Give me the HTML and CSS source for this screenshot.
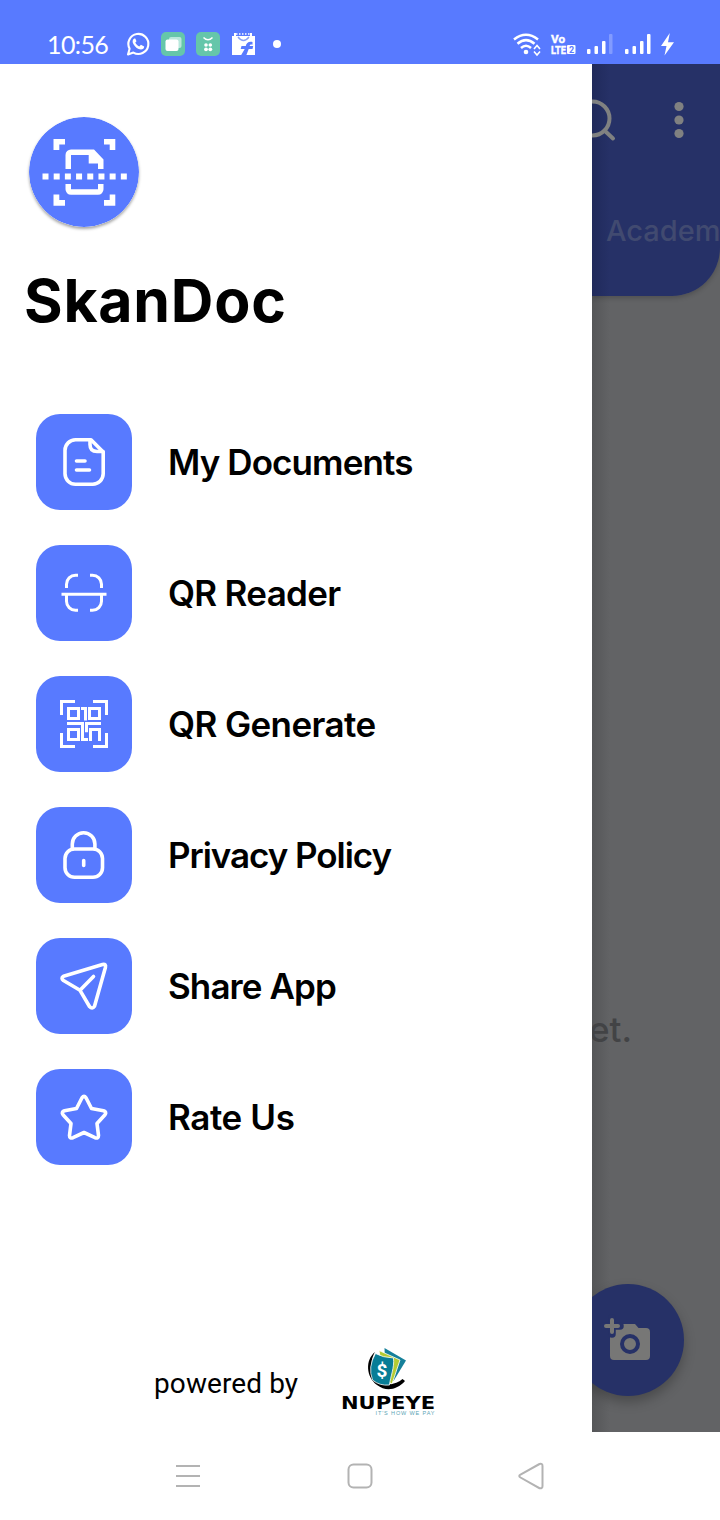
FILE: index.html
```html
<!DOCTYPE html>
<html lang="en">
<head>
	<meta charset="UTF-8">
	<title>SkanDoc</title>
	<link rel="stylesheet" href="styles.css">
</head>
<body>

<div class="status-bar">
	<span class="clock">10:56</span>
	<svg class="notifications" viewBox="120 30 165 30">
		<path d="M128 54.500l1.600-5.800a10 10 0 1 1 3.800 3.900z" fill="none" stroke="#fff" stroke-width="2.100" stroke-linejoin="round"/>
		<path d="M134.300 38.500c-2 1-2.200 3.500-.8 5.700 1.800 3 4.200 5 7.400 5.300 2 0 3.300-1.200 3.300-3l-3.300-1.800-1.600 1.700c-1.800-.6-3.300-2.200-4-3.800l1.200-1.400-1.200-2.700z" fill="#fff"/>
		<rect x="161" y="32" width="24" height="24" rx="5" fill="#65c6aa"/>
		<rect x="169" y="37" width="12.500" height="11" rx="2" fill="#b9e8dc"/>
		<rect x="165.500" y="39.500" width="13" height="11.500" rx="2" fill="#fff"/>
		<rect x="196" y="32" width="24" height="24" rx="5" fill="#65c6aa"/>
		<path d="M203.500 37.500q4.500 4.500 9 0" fill="none" stroke="#fff" stroke-width="1.500"/>
		<g fill="#fff"><circle cx="206" cy="45" r="1.800"/><circle cx="210.300" cy="45" r="1.800"/><circle cx="206" cy="49.300" r="1.900"/><circle cx="210.300" cy="49.300" r="1.900"/></g>
		<path d="M232 36h2v-3h2v3h14v-3h2v3h3v19h-23z" fill="#fff"/>
		<path d="M236 34h15" stroke="#fff" stroke-width="1.500" stroke-dasharray="1.500 1.500"/>
		<path d="M238 37q5.500 7 11 0" fill="none" stroke="#8aa0f5" stroke-width="1.300"/>
		<path d="M252.500 42c-4-.8-6.200 1-6.700 4h-4.300l-.8 3h4l-3.500 6h5.200l2.300-6h3.800l.7-3h-3.600c.4-1.400 1.300-1.600 2.900-1.300z" fill="#587aff"/>
		<circle cx="277" cy="44" r="4" fill="#fff"/>
	</svg>
	<svg class="signals" viewBox="510 30 170 30">
		<g fill="none" stroke="#fff" stroke-width="2.500">
			<path d="M514 39.500q12-9.500 24 0"/>
			<path d="M517.500 43.800q8.500-7.300 17 0"/>
			<path d="M521 48q5-4.500 10 0"/>
		</g>
		<circle cx="526" cy="52" r="2.300" fill="#fff"/>
		<path d="M534 49l3-3.500 3 3.500M534 51.500l3 3.500 3-3.500" fill="none" stroke="#fff" stroke-width="1.600"/>
		<text class="volte" x="551" y="43" textLength="14" lengthAdjust="spacingAndGlyphs">Vo</text>
		<text class="volte" x="551" y="54" textLength="15" lengthAdjust="spacingAndGlyphs">LTE</text>
		<rect x="567" y="45" width="8.500" height="9" rx="1" fill="#fff"/>
		<text class="sim" x="569" y="52.800">2</text>
		<g fill="#fff">
			<rect x="587" y="49" width="3.500" height="5" rx="1"/>
			<rect x="594.500" y="46" width="3.500" height="8" rx="1"/>
			<rect x="602" y="41" width="3.500" height="13" rx="1"/>
			<rect x="609" y="34" width="3.500" height="20" rx="1" opacity=".25"/>
			<rect x="625" y="49" width="3.500" height="5" rx="1"/>
			<rect x="632.500" y="46" width="3.500" height="8" rx="1"/>
			<rect x="640" y="41" width="3.500" height="13" rx="1"/>
			<rect x="647" y="34" width="3.500" height="20" rx="1"/>
			<path d="M669.800 33l-8.800 13h5.500l-2 9.500 9.500-13.300h-6z"/>
		</g>
	</svg>
</div>

<div class="screen">
	<div class="drawer">
		<svg class="logo" viewBox="29 117 110 110">
			<circle cx="84" cy="172" r="55" fill="#587aff"/>
			<g fill="#fff">
				<path d="M53.500 139H65v5.500h-5.700V150h-5.800zM104 139h11.300v11h-5.600v-5.500H104zM53.500 194.500h5.800v5.600H65v5.700H53.500zM109.700 194.500h5.600v11.300H104v-5.700h5.700z"/>
				<path d="M65.500 169v-14a5.500 5.500 0 0 1 5.500-5.500h23l9.500 10V169H98v-5.500h-9.300V155H71v14zM65.500 184H71v5.300h27V184h5.500v5.300a5.500 5.500 0 0 1-5.500 5.500H71a5.500 5.500 0 0 1-5.500-5.500z"/>
			</g>
			<path d="M42.500 176.500h84.500" stroke="#fff" stroke-width="6" stroke-dasharray="6 5.190"/>
		</svg>
		<h1>SkanDoc</h1>

		<ul class="menu">
			<li>
				<svg class="tile" viewBox="0 0 96 96">
					<path d="M55 25.800H39.500A10.500 10.500 0 0 0 29 36.300v23.500a10.500 10.500 0 0 0 10.500 10.400h17a10.500 10.500 0 0 0 10.700-10.400V38z"/>
					<path d="M54 26v4.500q0 7 7 7h6M40.500 47H49M40.500 56h13"/>
				</svg>
				<span class="documents">My Documents</span>
			</li>
			<li>
				<svg class="tile thin" viewBox="0 0 96 96">
					<path d="M42 30.200h-2.500a9 9 0 0 0-9 9V43M54 30.200h2.500a9 9 0 0 1 9 9V43M30.500 49.300v7a9 9 0 0 0 9 9H42M65.500 49.300v7a9 9 0 0 1-9 9H54M25.500 49.300h45"/>
				</svg>
				<span class="reader">QR Reader</span>
			</li>
			<li>
				<svg class="tile thin square" viewBox="0 0 96 96">
					<path d="M25.500 39V25.500H39M57 25.500h13.500V39M25.500 57v13.500H39M57 70.500h13.500V57"/>
					<path d="M32.500 32.500h10v10h-10zM53.500 32.500h10v10h-10zM32.500 53.500h10v10h-10zM45 32.500h4.500v12"/>
					<path d="M31 47.500h15.500v16H52M65 47.500H50.500v8.800M54.500 65V53.500h9V65"/>
				</svg>
				<span class="generate">QR Generate</span>
			</li>
			<li>
				<svg class="tile" viewBox="0 0 96 96">
					<rect x="29" y="42" width="37.500" height="28.300" rx="9.500"/>
					<path d="M36.300 42v-5a11.300 11.300 0 0 1 22.600 0v5M47.700 53.500v5"/>
				</svg>
				<span class="privacy">Privacy Policy</span>
			</li>
			<li>
				<svg class="tile" viewBox="0 0 96 96">
					<path d="M27.500 38.200L66.500 26.500Q70.300 25.700 69.400 29.500L58.500 68.300Q56.300 71.500 53.500 68.500L44 52.300 27.500 42.500Q24.500 40 27.500 38.200zM44 52.300L57.500 38.500"/>
				</svg>
				<span class="share">Share App</span>
			</li>
			<li>
				<svg class="tile" viewBox="0 0 96 96">
					<path d="M46 28.800Q48 26 50 28.800L55.500 39.500 67.500 41.800Q71 43 69 45.700L61 54.500 62.500 66.500Q62.500 69.700 59 68.700L48 63.500 37 68.700Q33.500 69.700 33.500 66.500L35 54.500 27 45.700Q25 43 28.500 41.800L40.500 39.500z"/>
				</svg>
				<span class="rate">Rate Us</span>
			</li>
		</ul>

		<div class="powered">
			<span>powered by</span>
			<svg class="nupeye" viewBox="340 1345 98 72">
				<path d="M375 1352c-10 8-9 25 2 33 9 7 20 5 28-4l-2.500-2c-6 5-14 7-21 3-10-6-13-19-6.500-30z" fill="#000"/>
				<path d="M384.500 1348l21.500 12.500-12.500 20.500-8-4z" fill="#16809a"/>
				<path d="M379 1350.500l21 9.500-8 24-8-5z" fill="#b4cb32" stroke="#fff" stroke-width=".8"/>
				<path d="M375.500 1353.500q7 4 18 4.500c1 10-3 18-4 27q-10 1-17-5-5-13 3-26.500z" fill="#087d96" stroke="#fff" stroke-width=".8"/>
				<text class="dollar" x="376.500" y="1377">$</text>
				<text class="brand" x="341" y="1408.500" textLength="94" lengthAdjust="spacingAndGlyphs">NUPEYE</text>
				<text class="slogan" x="375.500" y="1415" textLength="59">IT'S HOW WE PAY</text>
			</svg>
		</div>
	</div>

	<div class="page">
		<div class="header">
			<div class="actions">
				<svg class="search" viewBox="575 98 42 44"><circle cx="592.500" cy="118.500" r="17"/><path d="M604.500 130.500l8.500 8"/></svg>
				<svg class="more" viewBox="674 100 10 40"><circle cx="679" cy="106.500" r="4.600"/><circle cx="679" cy="120" r="4.600"/><circle cx="679" cy="133.500" r="4.600"/></svg>
			</div>
			<span class="tab">Academ</span>
		</div>
		<p class="empty">et.</p>
		<div class="fab">
			<svg viewBox="600 1314 54 50">
				<path d="M610 1324h25l3.500 4H646q4 0 4 4v24q0 4-4 4h-32q-4 0-4-4z" fill="#777776"/>
				<path d="M612 1318v16M604 1326h16" stroke="#263167" stroke-width="7.500" stroke-linecap="round"/>
				<path d="M612 1320v12M606 1326h12" stroke="#777776" stroke-width="4" stroke-linecap="round"/>
				<circle cx="630" cy="1344" r="8" fill="#777776" stroke="#263167" stroke-width="4"/>
			</svg>
		</div>
	</div>
</div>

<div class="nav-bar">
	<svg viewBox="0 0 28 28"><path d="M2 4h24M2 14h24M2 24h24"/></svg>
	<svg viewBox="0 0 28 28"><rect x="2.500" y="2.500" width="23" height="23" rx="5"/></svg>
	<svg viewBox="0 0 28 28"><path d="M21.500 2L2.500 12.500Q0 14 2.500 15.500L21.500 26.200Q24.500 27 24.500 24V4Q24.500 1 21.500 2z"/></svg>
</div>

</body>
</html>
```
FILE: styles.css
```css
* {
	box-sizing: border-box;
}

body {
	margin: 0;
	height: 1520px;
	overflow: hidden;
	background: #fff;
	color: #000;
	font-family: Inter, "Liberation Sans", sans-serif;
}

svg {
	display: block;
	flex: none;
}

/* status bar */

.status-bar {
	display: flex;
	height: 64px;
	padding: 30px 40px 4px 47px;
	background: #587aff;
	color: #fff;
}

.clock {
	width: 73px;
	font: 25px/28px Lato, sans-serif;
	letter-spacing: -0.6px;
	white-space: nowrap;
}

.notifications {
	width: 165px;
	height: 30px;
}

.signals {
	width: 170px;
	height: 30px;
	margin-left: auto;
}

.volte {
	font: bold 11.5px/1 Roboto, sans-serif;
	fill: #fff;
	stroke: #fff;
	stroke-width: 0.4px;
}

.sim {
	font: bold 9px Roboto, sans-serif;
	fill: #587aff;
}

/* drawer */

.screen {
	display: flex;
	height: 1368px;
}

.drawer {
	display: flex;
	flex-direction: column;
	flex: none;
	width: 592px;
	padding: 53px 0 15px;
	background: #fff;
}

.logo {
	width: 110px;
	height: 110px;
	margin-left: 29px;
	border-radius: 50%;
	box-shadow: 0 2px 3px rgba(0,0,0,0.35);
}

h1 {
	margin: 38px 0 0 24px;
	font-size: 59px;
	line-height: 72px;
	font-weight: 700;
	letter-spacing: 0.75px;
}

.menu {
	display: flex;
	flex-direction: column;
	gap: 35px;
	list-style: none;
	margin: 77px 0 0;
	padding: 0 36px;
}

.menu li {
	display: flex;
	align-items: center;
	gap: 36px;
	font-size: 35px;
	font-weight: 600;
	letter-spacing: -0.7px;
	white-space: nowrap;
}

.menu .documents {
	letter-spacing: -0.9px;
}

.menu .generate {
	letter-spacing: -0.6px;
}

.menu .privacy {
	letter-spacing: -1.05px;
}

.menu .share {
	letter-spacing: -0.9px;
}

.menu .rate {
	letter-spacing: -0.4px;
}

.tile {
	width: 96px;
	height: 96px;
	border-radius: 24px;
	background: #587aff;
	fill: none;
	stroke: #fff;
	stroke-width: 3.6px;
	stroke-linecap: round;
	stroke-linejoin: round;
}

.tile.thin {
	stroke-width: 3px;
	stroke-linecap: butt;
}

.tile.square {
	stroke-linejoin: miter;
}

.powered {
	display: flex;
	align-items: center;
	gap: 42px;
	margin-top: auto;
	padding-left: 154px;
	font: 28px/34px Roboto, sans-serif;
}

.powered span {
	padding-top: 6px;
	letter-spacing: 0.1px;
}

.nupeye {
	width: 98px;
	height: 72px;
}

.dollar {
	font: bold 19px Roboto, sans-serif;
	fill: #fff;
}

.brand {
	font: bold 17px "DejaVu Sans", sans-serif;
}

.slogan {
	font: 5.5px "Liberation Sans", sans-serif;
	fill: #5ba5b5;
}

/* dimmed page behind the drawer */

.page {
	display: flex;
	flex-direction: column;
	flex: 1;
	min-width: 0;
	overflow: hidden;
	background: linear-gradient(90deg, #555658, #626365 18px);
}

.header {
	height: 232px;
	padding-top: 34px;
	border-radius: 0 0 48px 0;
	background: linear-gradient(90deg, #202a5b, #263167 18px);
	box-shadow: 0 2px 5px rgba(0,0,0,0.2);
	overflow: hidden;
}

.actions {
	display: flex;
	align-items: center;
	gap: 57px;
	margin-left: -17px;
}

.search {
	width: 42px;
	height: 44px;
	fill: none;
	stroke: #808181;
	stroke-width: 4px;
	stroke-linecap: round;
}

.more {
	width: 10px;
	height: 40px;
	fill: #808181;
}

.tab {
	display: block;
	margin: 71px 0 0 14px;
	font-size: 29px;
	line-height: 36px;
	font-weight: 500;
	color: #414a70;
}

.empty {
	margin: 711px 0 0 -3px;
	font-size: 35px;
	line-height: 44px;
	font-weight: 500;
	color: #424345;
}

.fab {
	width: 112px;
	height: 112px;
	margin: auto 0 36px -20px;
	padding: 30px 28px;
	border-radius: 50%;
	background: #263167;
	box-shadow: 0 6px 12px rgba(0,0,0,0.25);
}

.fab svg {
	width: 54px;
	height: 50px;
}

/* system navigation */

.nav-bar {
	display: flex;
	justify-content: center;
	align-items: center;
	gap: 144px;
	height: 88px;
}

.nav-bar svg {
	width: 28px;
	height: 28px;
	fill: none;
	stroke: #b3b3b3;
	stroke-width: 2px;
}
```
